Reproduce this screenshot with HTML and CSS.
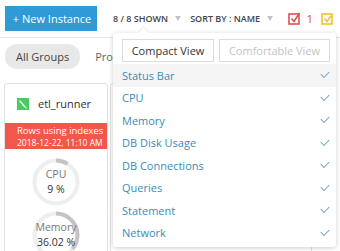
FILE: index.html
```
<!DOCTYPE html>
<html lang="en">
<head>
    <meta charset="UTF-8">
    <title>Instances</title>
    <link rel="stylesheet" href="styles.css">
</head>
<body>
    <div class="toolbar">
        <button class="btn-new">+ New Instance</button>
        <span class="filter">8 / 8 SHOWN <span class="caret"></span></span>
        <span class="filter">SORT BY : NAME <span class="caret"></span></span>
        <span class="alerts">
            <svg class="alert-icon" width="13" height="13" viewBox="0 0 13 13">
                <rect x="1" y="2" width="10" height="10" fill="none" stroke="#d9534f" stroke-width="1.6"/>
                <polyline points="3.5,6.5 6,9.5 11.5,1" fill="none" stroke="#d9534f" stroke-width="1.6"/>
            </svg>
            <span class="alert-count">1</span>
            <svg class="alert-icon" width="13" height="13" viewBox="0 0 13 13">
                <rect x="1" y="2" width="10" height="10" fill="none" stroke="#f0c030" stroke-width="1.6"/>
                <polyline points="3.5,6.5 6,9.5 10,4" fill="none" stroke="#f0c030" stroke-width="1.6"/>
            </svg>
        </span>
    </div>
    <div class="rule"></div>
    <div class="groups">
        <span class="pill">All Groups</span>
        <span class="group">Prod</span>
    </div>
    <div class="cards">
        <div class="card">
            <div class="card-head">
                <svg width="12" height="12" viewBox="0 0 12 12">
                    <rect width="12" height="12" fill="#4cc960"/>
                    <path d="M3 2 L9 9 L10 11 L7 9 L2 3 Z" fill="#e8ffe8"/>
                </svg>
                <span class="card-name">etl_runner</span>
            </div>
            <div class="status">
                <div class="status-title">Rows using indexes</div>
                <div class="status-time">2018-12-22, 11:10 AM</div>
            </div>
            <div class="gauge">
                <svg width="48" height="48" viewBox="0 0 48 48">
                    <circle cx="24" cy="24" r="21.5" fill="none" stroke="#eeeeee" stroke-width="4"/>
                    <circle cx="24" cy="24" r="21.5" fill="none" stroke="#c4c4c4" stroke-width="4"
                        stroke-dasharray="12.2 200" transform="rotate(-90 24 24)"/>
                </svg>
                <div class="gauge-text">
                    <span class="gauge-label">CPU</span>
                    <span class="gauge-value">9 %</span>
                </div>
            </div>
            <div class="gauge">
                <svg width="48" height="48" viewBox="0 0 48 48">
                    <circle cx="24" cy="24" r="21.5" fill="none" stroke="#eeeeee" stroke-width="4"/>
                    <circle cx="24" cy="24" r="21.5" fill="none" stroke="#c4c4c4" stroke-width="4"
                        stroke-dasharray="48.6 200" transform="rotate(-90 24 24)"/>
                </svg>
                <div class="gauge-text">
                    <span class="gauge-label">Memory</span>
                    <span class="gauge-value">36.02 %</span>
                </div>
            </div>
        </div>
        <div class="card card-next">
            <div class="row"></div>
            <div class="row"></div>
            <div class="row"></div>
        </div>
    </div>

    <div class="menu">
        <div class="view-toggle">
            <button class="view-btn">Compact View</button>
            <button class="view-btn disabled">Comfortable View</button>
        </div>
        <ul class="menu-list">
            <li class="active">Status Bar <span class="tick"></span></li>
            <li>CPU <span class="tick"></span></li>
            <li>Memory <span class="tick"></span></li>
            <li>DB Disk Usage <span class="tick"></span></li>
            <li>DB Connections <span class="tick"></span></li>
            <li>Queries <span class="tick"></span></li>
            <li>Statement <span class="tick"></span></li>
            <li>Network <span class="tick"></span></li>
        </ul>
    </div>
</body>
</html>
```
FILE: styles.css
```
body {
    margin: 0;
    padding: 0;
    background: #fff;
    font-family: "Open Sans", Arial, sans-serif;
    color: #333;
    width: 340px;
    height: 251px;
    overflow: hidden;
    position: relative;
}
.toolbar {
    display: flex;
    align-items: center;
    height: 25px;
    padding: 6px 5px 6px 5px;
    white-space: nowrap;
}
.btn-new {
    flex: none;
    height: 25px;
    width: 92px;
    padding: 0 0 0 2px;
    border: none;
    background-color: #2f9ad6;
    color: #fff;
    font-family: inherit;
    font-size: 11px;
    margin-right: 16px;
}
.filter {
    flex: none;
    display: flex;
    align-items: center;
    font-size: 9px;
    font-weight: 600;
    color: #444;
    margin-right: 9px;
}
.caret {
    display: inline-block;
    width: 0;
    height: 0;
    border-left: 3.5px solid transparent;
    border-right: 3.5px solid transparent;
    border-top: 5px solid #c6c6c6;
    margin-left: 7px;
}
.alerts {
    flex: none;
    display: flex;
    align-items: center;
    margin-left: auto;
    margin-right: 1px;
}
.alert-count {
    color: #d9534f;
    font-size: 11.5px;
    margin: 0 8px 0 5px;
}
.rule {
    height: 1px;
    background: #e6e6e6;
}
.groups {
    display: flex;
    align-items: center;
    padding: 6px 5px 0;
}
.pill {
    background: #e8e8e8;
    border-radius: 12px;
    padding: 5px 11px;
    font-size: 11px;
    color: #444;
}
.group {
    font-size: 11px;
    color: #666;
    margin-left: 15px;
}
.cards {
    display: flex;
    gap: 2px;
    padding: 14px 0 0 4px;
    height: 172px;
    overflow: hidden;
}
.card {
    flex: none;
    width: 102px;
    height: 200px;
    border: 1px solid #e2e2e2;
    border-radius: 3px;
}
.card-head {
    display: flex;
    align-items: center;
    padding: 12px 12px 12px;
}
.card-name {
    font-size: 11px;
    margin-left: 9px;
    color: #333;
}
.status {
    background: #f3564a;
    color: #fff;
    padding: 2px 0 2px 12px;
    height: 22px;
    white-space: nowrap;
}
.status-title {
    font-size: 9.5px;
    line-height: 12px;
}
.status-time {
    font-size: 8.5px;
    line-height: 11px;
}
.gauge {
    position: relative;
    width: 48px;
    height: 48px;
    margin: 9px auto 0;
}
.gauge + .gauge {
    margin-top: 5px;
}
.gauge svg {
    display: block;
}
.gauge-text {
    position: absolute;
    inset: 0;
    display: flex;
    flex-direction: column;
    align-items: center;
    justify-content: center;
}
.gauge-label {
    font-size: 10.5px;
    color: #777;
    line-height: 15px;
}
.gauge-value {
    font-size: 10.5px;
    color: #333;
    line-height: 15px;
}
.card-next {
    width: 200px;
    padding-top: 80px;
}
.row {
    height: 48px;
    border-top: 1px solid #ececec;
}
.menu {
    position: absolute;
    left: 113px;
    top: 33px;
    width: 223px;
    background: #fff;
    border-radius: 3px;
    box-shadow: 0 1px 5px rgba(0, 0, 0, 0.2);
    padding-bottom: 3px;
}
.menu::before {
    content: "";
    position: absolute;
    left: 27px;
    top: -4px;
    width: 7px;
    height: 7px;
    background: #fff;
    transform: rotate(45deg);
    box-shadow: -1px -1px 1px rgba(0, 0, 0, 0.08);
}
.view-toggle {
    display: flex;
    gap: 5px;
    padding: 6px 6px 2px 9px;
    position: relative;
}
.view-btn {
    height: 23px;
    border: 1px solid #dcdcdc;
    background: #fff;
    font-family: inherit;
    font-size: 11px;
    color: #333;
    padding: 0;
    width: 92px;
}
.view-btn.disabled {
    color: #c4c4c4;
    width: 111px;
}
.menu-list {
    list-style: none;
    margin: 0;
    padding: 0;
}
.menu-list li {
    display: flex;
    align-items: center;
    justify-content: space-between;
    height: 22.5px;
    padding: 0 7px 0 9px;
    font-size: 11px;
    color: #3b8cb8;
}
.menu-list li.active {
    background: #f5f5f5;
}
.tick {
    width: 7px;
    height: 4px;
    border-left: 1px solid #6fa6c6;
    border-bottom: 1px solid #6fa6c6;
    transform: rotate(-45deg);
    margin-top: -3px;
}
```
